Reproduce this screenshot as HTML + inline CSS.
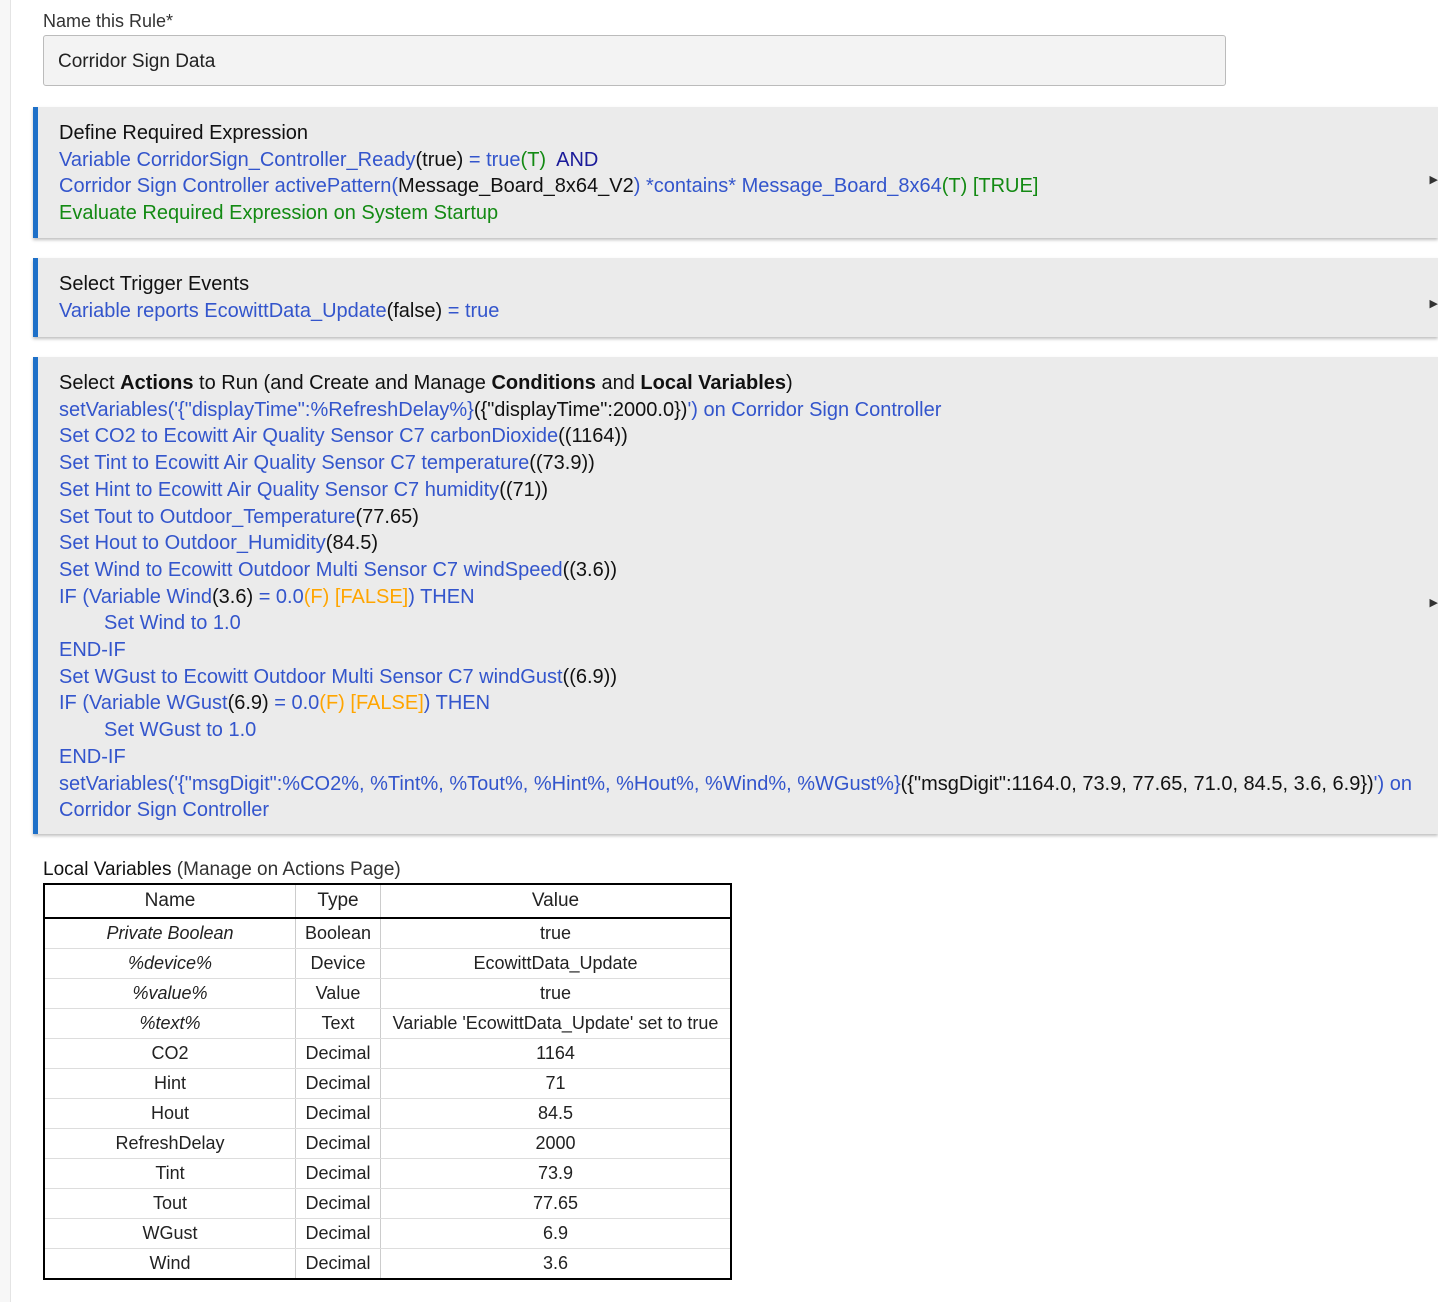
<!DOCTYPE html>
<html><head><meta charset="utf-8"><style>
body{margin:0;width:1438px;height:1302px;background:#fff;font-family:"Liberation Sans",Arial,sans-serif;position:relative;overflow:hidden;color:#222}
.side{position:absolute;left:0;top:0;width:10px;height:1302px;background:#f7f7f7;border-right:1px solid #e4e4e4}
.lbl{position:absolute;left:43px;top:11px;font-size:18px;color:#333}
.inp{position:absolute;left:43px;top:35px;height:51px;border:1px solid #bbb;border-radius:3px;background:#f3f3f3;font-size:19px;line-height:52px;padding-left:14px;box-sizing:border-box;width:1183px;color:#222}
.pan{position:absolute;left:33px;width:1405px;background:#ebebeb;border-left:5px solid #1e70c8;box-sizing:border-box;padding:13px 0 11px 21px;font-size:20px;line-height:26.7px;box-shadow:0 2px 3px rgba(0,0,0,.25);white-space:nowrap}
.b{color:#3355cc}.g{color:#138a13}.n{color:#1a1a99}.o{color:#ffa500}.k{color:#111}
.arr{position:absolute;right:0;font-size:11px;color:#333}
.ind{padding-left:45px}
.tl{position:absolute;left:43px;top:859px;font-size:19px;color:#333}
table{position:absolute;left:43px;top:883px;border-collapse:collapse;border:2px solid #000;font-size:18px;width:689px}
td,th{font-weight:normal;text-align:center;height:29px;padding:0;border-bottom:1px solid #ddd;border-left:1px solid #ccc}
th{height:32px;border-bottom:2px solid #000;font-size:19px}
td:first-child,th:first-child{border-left:none}
i{font-style:italic}
</style></head><body>
<div class="side"></div>
<div class="lbl">Name this Rule*</div>
<div class="inp">Corridor Sign Data</div>

<div class="pan" style="top:107px;height:131px">
<div class="k">Define Required Expression</div>
<div><span class="b">Variable CorridorSign_Controller_Ready</span><span class="k">(true)</span><span class="b"> = true</span><span class="g">(T)</span>&nbsp; <span class="n">AND</span></div>
<div><span class="b">Corridor Sign Controller activePattern(</span><span class="k">Message_Board_8x64_V2</span><span class="b">) *contains* Message_Board_8x64</span><span class="g">(T) [TRUE]</span></div>
<div class="g">Evaluate Required Expression on System Startup</div>
<span class="arr" style="top:60px">▶</span>
</div>

<div class="pan" style="top:258px;height:79px">
<div class="k">Select Trigger Events</div>
<div><span class="b">Variable reports EcowittData_Update</span><span class="k">(false)</span><span class="b"> = true</span></div>
<span class="arr" style="top:33px">▶</span>
</div>

<div class="pan" style="top:357px;height:477px">
<div class="k">Select <b>Actions</b> to Run (and Create and Manage <b>Conditions</b> and <b>Local Variables</b>)</div>
<div><span class="b">setVariables('{"displayTime":%RefreshDelay%}</span><span class="k">({"displayTime":2000.0})</span><span class="b">') on Corridor Sign Controller</span></div>
<div><span class="b">Set CO2 to Ecowitt Air Quality Sensor C7 carbonDioxide</span><span class="k">((1164))</span></div>
<div><span class="b">Set Tint to Ecowitt Air Quality Sensor C7 temperature</span><span class="k">((73.9))</span></div>
<div><span class="b">Set Hint to Ecowitt Air Quality Sensor C7 humidity</span><span class="k">((71))</span></div>
<div><span class="b">Set Tout to Outdoor_Temperature</span><span class="k">(77.65)</span></div>
<div><span class="b">Set Hout to Outdoor_Humidity</span><span class="k">(84.5)</span></div>
<div><span class="b">Set Wind to Ecowitt Outdoor Multi Sensor C7 windSpeed</span><span class="k">((3.6))</span></div>
<div><span class="b">IF (Variable Wind</span><span class="k">(3.6)</span><span class="b"> = 0.0</span><span class="o">(F) [FALSE]</span><span class="b">) THEN</span></div>
<div class="b ind">Set Wind to 1.0</div>
<div class="b">END-IF</div>
<div><span class="b">Set WGust to Ecowitt Outdoor Multi Sensor C7 windGust</span><span class="k">((6.9))</span></div>
<div><span class="b">IF (Variable WGust</span><span class="k">(6.9)</span><span class="b"> = 0.0</span><span class="o">(F) [FALSE]</span><span class="b">) THEN</span></div>
<div class="b ind">Set WGust to 1.0</div>
<div class="b">END-IF</div>
<div><span class="b">setVariables('{"msgDigit":%CO2%, %Tint%, %Tout%, %Hint%, %Hout%, %Wind%, %WGust%}</span><span class="k">({"msgDigit":1164.0, 73.9, 77.65, 71.0, 84.5, 3.6, 6.9})</span><span class="b">') on</span></div>
<div class="b">Corridor Sign Controller</div>
<span class="arr" style="top:233px">▶</span>
</div>

<div class="tl"><span style="color:#111">Local Variables</span> (Manage on Actions Page)</div>
<table>
<tr><th style="width:250px">Name</th><th style="width:84px">Type</th><th>Value</th></tr>
<tr><td><i>Private Boolean</i></td><td>Boolean</td><td>true</td></tr>
<tr><td><i>%device%</i></td><td>Device</td><td>EcowittData_Update</td></tr>
<tr><td><i>%value%</i></td><td>Value</td><td>true</td></tr>
<tr><td><i>%text%</i></td><td>Text</td><td>Variable 'EcowittData_Update' set to true</td></tr>
<tr><td>CO2</td><td>Decimal</td><td>1164</td></tr>
<tr><td>Hint</td><td>Decimal</td><td>71</td></tr>
<tr><td>Hout</td><td>Decimal</td><td>84.5</td></tr>
<tr><td>RefreshDelay</td><td>Decimal</td><td>2000</td></tr>
<tr><td>Tint</td><td>Decimal</td><td>73.9</td></tr>
<tr><td>Tout</td><td>Decimal</td><td>77.65</td></tr>
<tr><td>WGust</td><td>Decimal</td><td>6.9</td></tr>
<tr><td>Wind</td><td>Decimal</td><td>3.6</td></tr>
</table>
</body></html>
